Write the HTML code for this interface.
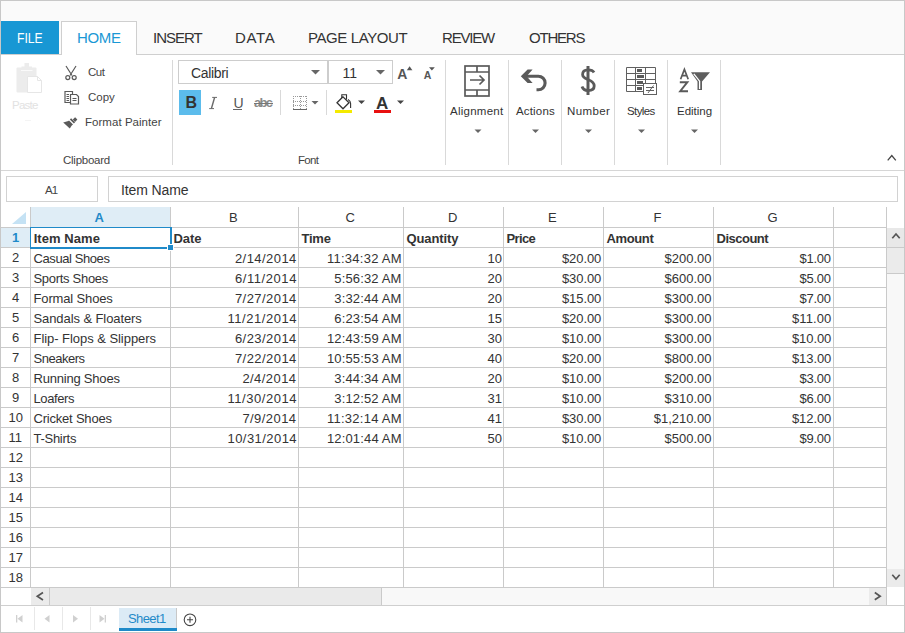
<!DOCTYPE html><html><head><meta charset="utf-8"><style>
*{margin:0;padding:0;box-sizing:border-box}
html,body{width:905px;height:633px;overflow:hidden;background:#fff}
body{font-family:"Liberation Sans",sans-serif;color:#333;position:relative}
.a{position:absolute}
.t{position:absolute;white-space:nowrap;line-height:1}
svg{position:absolute;overflow:visible}
</style></head><body>
<div class="a" style="left:1px;top:1px;width:903px;height:53px;background:#fafafa"></div>
<div class="a" style="left:1px;top:54px;width:903px;height:1px;background:#cfcfcf"></div>
<div class="a" style="left:1px;top:21px;width:58px;height:33px;background:#1897d4"></div>
<div class="t" style="left:17.00px;top:30px;font-size:15px;color:#fff;transform:scaleX(0.8125);transform-origin:0 0">FILE</div>
<div class="a" style="left:61px;top:21px;width:76px;height:34px;background:#fff;border:1px solid #cfcfcf;border-bottom:none"></div>
<div class="t" style="left:77.00px;top:30px;font-size:15px;color:#1a98d5;letter-spacing:-0.333px">HOME</div>
<div class="t" style="left:153.00px;top:30px;font-size:15px;color:#333;letter-spacing:-1.000px">INSERT</div>
<div class="t" style="left:235.00px;top:30px;font-size:15px;color:#333;letter-spacing:0.667px">DATA</div>
<div class="t" style="left:308.00px;top:30px;font-size:15px;color:#333;letter-spacing:-0.400px">PAGE LAYOUT</div>
<div class="t" style="left:442.00px;top:30px;font-size:15px;color:#333;letter-spacing:-1.200px">REVIEW</div>
<div class="t" style="left:529.00px;top:30px;font-size:15px;color:#333;letter-spacing:-1.200px">OTHERS</div>
<div class="a" style="left:1px;top:170px;width:903px;height:1px;background:#d6d6d6"></div>
<div class="a" style="left:172px;top:60px;width:1px;height:105px;background:#d9d9d9"></div>
<div class="a" style="left:445px;top:60px;width:1px;height:105px;background:#d9d9d9"></div>
<div class="a" style="left:508px;top:60px;width:1px;height:105px;background:#d9d9d9"></div>
<div class="a" style="left:561px;top:60px;width:1px;height:105px;background:#d9d9d9"></div>
<div class="a" style="left:614px;top:60px;width:1px;height:105px;background:#d9d9d9"></div>
<div class="a" style="left:667px;top:60px;width:1px;height:105px;background:#d9d9d9"></div>
<div class="a" style="left:720px;top:60px;width:1px;height:105px;background:#d9d9d9"></div>
<div class="t" style="left:63.00px;top:155px;font-size:11.5px;color:#444;letter-spacing:-0.250px">Clipboard</div>
<div class="t" style="left:298.00px;top:155px;font-size:11.5px;color:#444;letter-spacing:-0.667px">Font</div>
<svg style="left:0;top:0" width="905" height="633" viewBox="0 0 905 633">
<g fill="#ececec">
<rect x="16.5" y="67.5" width="20" height="25" rx="1"/>
<rect x="24.5" y="63" width="4.5" height="5"/>
<rect x="21.5" y="66.5" width="10.5" height="4"/>
</g>
<path d="M21 70.5 H32.5" stroke="#fafafa" stroke-width="1"/>
<path d="M27.5 76.5 H37.5 L41.5 80.5 V92.5 H27.5 Z" fill="#fff" stroke="#e6e6e6" stroke-width="1"/>
<path d="M37.5 76.5 V80.5 H41.5" fill="none" stroke="#e6e6e6" stroke-width="1"/>
</svg>
<div class="t" style="left:12.00px;top:100px;font-size:11.5px;color:#e2e2e2;letter-spacing:-0.750px">Paste</div>
<div class="a" style="left:25px;top:120px;width:6px;height:1px;background:#f4f4f4"></div>
<svg style="left:0;top:0" width="905" height="633" viewBox="0 0 905 633" fill="none" stroke="#5a5a5a" stroke-width="1.2">
<path d="M66 66 L72 75.5 M76 66 L70 75.5"/>
<circle cx="67.8" cy="77.6" r="2"/>
<circle cx="74.2" cy="77.6" r="2"/>
<path d="M72.5 94 V91.5 H65 V102.5 H70.5"/>
<path d="M70.5 94.5 H76.5 L78.5 96.5 V104 H70.5 Z"/>
<path d="M66.5 94.5 H69 M66.5 96.5 H69 M66.5 98.5 H69 M66.5 100.5 H69 M72.5 98.5 H76.5 M72.5 100.5 H76.5" stroke-width="1"/>
</svg>
<svg style="left:0;top:0" width="905" height="633" viewBox="0 0 905 633">
<path d="M63.2 122.6 L68.4 120.9 L72.2 124.8 L69.8 128.6 Z" fill="#5a5a5a"/>
<path d="M68.4 121 L72.4 125" stroke="#5a5a5a" stroke-width="1.7"/>
<path d="M70.5 118.9 L74.5 122.9" stroke="#5a5a5a" stroke-width="1.7"/>
<path d="M75.1 117.3 L77.4 119.6 L75.1 121.9 L72.8 119.6 Z" fill="#5a5a5a"/>
</svg>
<div class="t" style="left:88.00px;top:67px;font-size:11.5px;color:#444;letter-spacing:-0.500px">Cut</div>
<div class="t" style="left:88.00px;top:92px;font-size:11.5px;color:#444">Copy</div>
<div class="t" style="left:85.00px;top:117px;font-size:11.5px;color:#444;letter-spacing:0.038px">Format Painter</div>
<div class="a" style="left:178px;top:60px;width:150px;height:24px;border:1px solid #cdcdcd"></div>
<div class="a" style="left:328px;top:60px;width:65px;height:24px;border:1px solid #cdcdcd"></div>
<div class="t" style="left:191.00px;top:66px;font-size:14px;color:#333;letter-spacing:-0.333px">Calibri</div>
<div class="t" style="left:342.50px;top:66px;font-size:14px;color:#333">11</div>
<svg style="left:0;top:0" width="905" height="633" viewBox="0 0 905 633" fill="#666">
<path d="M311 70 H320 L315.5 74.5 Z"/>
<path d="M376 70 H385 L380.5 74.5 Z"/>
<path d="M311.5 101 H318.5 L315 104.5 Z"/>
<path d="M358 100.5 H365 L361.5 104 Z" fill="#444"/>
<path d="M397 100.5 H404 L400.5 104 Z" fill="#444"/>
<path d="M406.8 70.2 L409.6 66.2 L412.4 70.2 Z" fill="#555"/>
<path d="M429 67.2 H434.8 L431.9 70.4 Z" fill="#555"/>
</svg>
<div class="t" style="left:397.20px;top:67px;font-size:14px;color:#555;font-weight:bold">A</div>
<div class="t" style="left:423.80px;top:70px;font-size:10.5px;color:#555;font-weight:bold">A</div>
<div class="a" style="left:179px;top:90px;width:22px;height:25px;background:#5cbcec"></div>
<div class="t" style="left:185.50px;top:95px;font-size:16px;color:#333;font-weight:bold">B</div>
<svg style="left:0;top:0" width="905" height="633" fill="none" stroke="#6a6a6a"><path d="M214.6 97.5 L211.4 108.5" stroke-width="1.4"/><path d="M212.2 97.4 H217 M209.2 108.6 H214" stroke-width="1"/></svg>
<div class="t" style="left:233.40px;top:96px;font-size:14px;color:#555">U</div>
<div class="a" style="left:233px;top:109px;width:9px;height:1px;background:#666"></div>
<div class="t" style="left:254.00px;top:96px;font-size:13px;color:#8a8a8a;font-weight:bold;letter-spacing:-1.750px">abc</div>
<div class="a" style="left:254px;top:103px;width:19px;height:1px;background:#777"></div>
<div class="a" style="left:280px;top:90px;width:1px;height:25px;background:#d9d9d9"></div>
<div class="a" style="left:326px;top:90px;width:1px;height:25px;background:#d9d9d9"></div>
<svg style="left:0;top:0" width="905" height="633" viewBox="0 0 905 633">
<g stroke="#999" stroke-width="1" stroke-dasharray="1 1" fill="none">
<path d="M293 96.5 H307 M293 101.5 H307 M293 105.5 H307"/>
<path d="M293.5 96 V109 M300.5 96 V109 M306.5 96 V109"/>
</g>
<path d="M293 109.5 H307" stroke="#666" stroke-width="1"/>
</svg>
<svg style="left:0;top:0" width="905" height="633" viewBox="0 0 905 633">
<rect x="335" y="110" width="17" height="3" fill="#f4ea00"/>
<path d="M341.8 98 V94.8 H346.5 V99.5" fill="none" stroke="#333" stroke-width="1.1"/>
<path d="M343 96.8 L337 102.8 L343 108.8 L349 102.8 Z" fill="none" stroke="#333" stroke-width="1.3"/>
<path d="M348 99.5 Q350.6 101 350.6 103.5 V108" fill="none" stroke="#333" stroke-width="1.1"/>
<rect x="374" y="110" width="17" height="3" fill="#e81010"/>
</svg>
<div class="t" style="left:376.00px;top:95px;font-size:17px;color:#333;font-weight:bold">A</div>
<svg style="left:0;top:0" width="905" height="633" viewBox="0 0 905 633" fill="none" stroke="#5a5a5a">
<g stroke-width="1.7">
<rect x="465" y="66" width="24" height="30"/>
<path d="M465 72 H489 M465 90 H489 M477 66 V72 M477 90 V96"/>
<path d="M470 80 H484 M479.5 75.5 L484 80 L479.5 84.5"/>
</g>
<path d="M525 76.2 H538.3 A 6.8 6.8 0 0 1 538.3 89.8 H536.5" stroke-width="3.1"/>
<path d="M520.8 76.3 L527.6 69.6 H532.6 L526.6 76.3 L532.6 83 H527.6 Z" fill="#5a5a5a" stroke="none"/>
<path d="M588 66 V95" stroke-width="3"/>
<path d="M594 72.5 C593 70.5 591 69.8 588 69.8 C584.5 69.8 582.6 71.8 582.6 74.5 C582.6 77.8 586 78.8 588.5 79.8 C591.5 81 594.2 82.5 594.2 86 C594.2 89 591.5 90.5 588 90.5 C584.8 90.5 582.8 89 582 86.5" stroke-width="2.8"/>
</svg>
<svg style="left:0;top:0" width="905" height="633" viewBox="0 0 905 633" fill="none" stroke="#606060" stroke-width="1">
<path d="M626.5 67.5 H655.5 V83 M626.5 67.5 V91.5 H643.5 M626.5 73.5 H655.5 M626.5 79.5 H655.5 M626.5 85.5 H643.5 M635.5 67.5 V91.5 M645.5 67.5 V83"/>
<g fill="#5a5a5a" stroke="none">
<rect x="637" y="69" width="5" height="3"/>
<rect x="637" y="75" width="7" height="3"/>
<rect x="637" y="81" width="6" height="3"/>
<rect x="637" y="87" width="5" height="3"/>
</g>
<rect x="643.5" y="83.5" width="13" height="11" fill="#fff"/>
<path d="M646 87.5 H654 M646 90.5 H654 M648 93 L653.5 85.5"/>
</svg>
<svg style="left:0;top:0" width="905" height="633" viewBox="0 0 905 633">
<path d="M680.6 79.2 L684.4 69.4 L688.2 79.2 M682 75.6 H686.8" fill="none" stroke="#5a5a5a" stroke-width="1.7"/>
<path d="M679.8 82.2 H687.4 L680.2 91.2 H688" fill="none" stroke="#5a5a5a" stroke-width="1.9"/>
<path d="M691 72.3 H710 L702 81.5 V90 H697.5 V81.5 Z" fill="#5e5e5e"/>
<path d="M693.8 73.8 L699.6 81.2 V89" fill="none" stroke="#fff" stroke-width="1.3"/>
</svg>
<div class="t" style="left:450.00px;top:106px;font-size:11.5px;color:#333;letter-spacing:0.250px">Alignment</div>
<div class="t" style="left:516.00px;top:106px;font-size:11.5px;color:#333;letter-spacing:0.167px">Actions</div>
<div class="t" style="left:567.00px;top:106px;font-size:11.5px;color:#333;letter-spacing:0.400px">Number</div>
<div class="t" style="left:627.00px;top:106px;font-size:11.5px;color:#333;letter-spacing:-0.600px">Styles</div>
<div class="t" style="left:677.00px;top:106px;font-size:11.5px;color:#333">Editing</div>
<svg style="left:0;top:0" width="905" height="633" viewBox="0 0 905 633" fill="#666">
<path d="M474.5 129.5 H481.5 L478 133 Z"/>
<path d="M532 129.5 H539 L535.5 133 Z"/>
<path d="M585 129.5 H592 L588.5 133 Z"/>
<path d="M638 129.5 H645 L641.5 133 Z"/>
<path d="M691 129.5 H698 L694.5 133 Z"/>
<path d="M887.7 160.4 L891.8 155.5 L895.8 160.4" fill="none" stroke="#444" stroke-width="1.3"/>
</svg>
<div class="a" style="left:6px;top:176px;width:92px;height:26px;border:1px solid #d2d2d2"></div>
<div class="t" style="left:45.00px;top:185px;font-size:11.5px;color:#444;letter-spacing:-1.000px">A1</div>
<div class="a" style="left:108px;top:176px;width:790px;height:26px;border:1px solid #d2d2d2"></div>
<div class="t" style="left:121.00px;top:183px;font-size:14px;color:#333;letter-spacing:-0.125px">Item Name</div>
<div class="a" style="left:31px;top:207px;width:139px;height:20px;background:#dfedf6"></div>
<div class="a" style="left:1px;top:228px;width:29px;height:19px;background:#dfedf6"></div>
<svg style="left:12px;top:212px" width="14" height="12"><polygon points="14,0 14,12 0,12" fill="#c5e2f4"/></svg>
<div class="a" style="left:30px;top:207px;width:1px;height:380px;background:#cacaca"></div>
<div class="a" style="left:170px;top:207px;width:1px;height:380px;background:#cacaca"></div>
<div class="a" style="left:298px;top:207px;width:1px;height:380px;background:#cacaca"></div>
<div class="a" style="left:403px;top:207px;width:1px;height:380px;background:#cacaca"></div>
<div class="a" style="left:503px;top:207px;width:1px;height:380px;background:#cacaca"></div>
<div class="a" style="left:603px;top:207px;width:1px;height:380px;background:#cacaca"></div>
<div class="a" style="left:713px;top:207px;width:1px;height:380px;background:#cacaca"></div>
<div class="a" style="left:833px;top:207px;width:1px;height:380px;background:#cacaca"></div>
<div class="a" style="left:886px;top:207px;width:1px;height:380px;background:#cacaca"></div>
<div class="a" style="left:1px;top:227px;width:885px;height:1px;background:#cacaca"></div>
<div class="a" style="left:1px;top:247px;width:885px;height:1px;background:#cacaca"></div>
<div class="a" style="left:1px;top:267px;width:885px;height:1px;background:#cacaca"></div>
<div class="a" style="left:1px;top:287px;width:885px;height:1px;background:#cacaca"></div>
<div class="a" style="left:1px;top:307px;width:885px;height:1px;background:#cacaca"></div>
<div class="a" style="left:1px;top:327px;width:885px;height:1px;background:#cacaca"></div>
<div class="a" style="left:1px;top:347px;width:885px;height:1px;background:#cacaca"></div>
<div class="a" style="left:1px;top:367px;width:885px;height:1px;background:#cacaca"></div>
<div class="a" style="left:1px;top:387px;width:885px;height:1px;background:#cacaca"></div>
<div class="a" style="left:1px;top:407px;width:885px;height:1px;background:#cacaca"></div>
<div class="a" style="left:1px;top:427px;width:885px;height:1px;background:#cacaca"></div>
<div class="a" style="left:1px;top:447px;width:885px;height:1px;background:#cacaca"></div>
<div class="a" style="left:1px;top:467px;width:885px;height:1px;background:#cacaca"></div>
<div class="a" style="left:1px;top:487px;width:885px;height:1px;background:#cacaca"></div>
<div class="a" style="left:1px;top:507px;width:885px;height:1px;background:#cacaca"></div>
<div class="a" style="left:1px;top:527px;width:885px;height:1px;background:#cacaca"></div>
<div class="a" style="left:1px;top:547px;width:885px;height:1px;background:#cacaca"></div>
<div class="a" style="left:1px;top:567px;width:885px;height:1px;background:#cacaca"></div>
<div class="a" style="left:1px;top:587px;width:885px;height:1px;background:#cacaca"></div>
<div class="t" style="left:94.50px;top:211px;font-size:13px;color:#1f8ac9;font-weight:bold">A</div>
<div class="t" style="left:229.00px;top:211px;font-size:13px;color:#333">B</div>
<div class="t" style="left:345.50px;top:211px;font-size:13px;color:#333">C</div>
<div class="t" style="left:448.00px;top:211px;font-size:13px;color:#333">D</div>
<div class="t" style="left:548.00px;top:211px;font-size:13px;color:#333">E</div>
<div class="t" style="left:653.50px;top:211px;font-size:13px;color:#333">F</div>
<div class="t" style="left:767.50px;top:211px;font-size:13px;color:#333">G</div>
<div class="t" style="left:12.00px;top:231px;font-size:13px;color:#1f8ac9;font-weight:bold">1</div>
<div class="t" style="left:12.00px;top:251px;font-size:13px;color:#333">2</div>
<div class="t" style="left:12.00px;top:271px;font-size:13px;color:#333">3</div>
<div class="t" style="left:12.00px;top:291px;font-size:13px;color:#333">4</div>
<div class="t" style="left:12.00px;top:311px;font-size:13px;color:#333">5</div>
<div class="t" style="left:12.00px;top:331px;font-size:13px;color:#333">6</div>
<div class="t" style="left:12.00px;top:351px;font-size:13px;color:#333">7</div>
<div class="t" style="left:12.00px;top:371px;font-size:13px;color:#333">8</div>
<div class="t" style="left:12.00px;top:391px;font-size:13px;color:#333">9</div>
<div class="t" style="left:8.50px;top:411px;font-size:13px;color:#333">10</div>
<div class="t" style="left:8.50px;top:431px;font-size:13px;color:#333">11</div>
<div class="t" style="left:8.50px;top:451px;font-size:13px;color:#333">12</div>
<div class="t" style="left:8.50px;top:471px;font-size:13px;color:#333">13</div>
<div class="t" style="left:8.50px;top:491px;font-size:13px;color:#333">14</div>
<div class="t" style="left:8.50px;top:511px;font-size:13px;color:#333">15</div>
<div class="t" style="left:8.50px;top:531px;font-size:13px;color:#333">16</div>
<div class="t" style="left:8.50px;top:551px;font-size:13px;color:#333">17</div>
<div class="t" style="left:8.50px;top:571px;font-size:13px;color:#333">18</div>
<div class="t" style="left:33.70px;top:232px;font-size:13px;color:#333;font-weight:bold;letter-spacing:0.062px">Item Name</div>
<div class="t" style="left:173.40px;top:232px;font-size:13px;color:#333;font-weight:bold">Date</div>
<div class="t" style="left:301.40px;top:232px;font-size:13px;color:#333;font-weight:bold;letter-spacing:-0.200px">Time</div>
<div class="t" style="left:406.50px;top:232px;font-size:13px;color:#333;font-weight:bold;letter-spacing:-0.100px">Quantity</div>
<div class="t" style="left:506.40px;top:232px;font-size:13px;color:#333;font-weight:bold;letter-spacing:-0.600px">Price</div>
<div class="t" style="left:606.40px;top:232px;font-size:13px;color:#333;font-weight:bold;letter-spacing:-0.340px">Amount</div>
<div class="t" style="left:716.60px;top:232px;font-size:13px;color:#333;font-weight:bold;letter-spacing:-0.514px">Discount</div>
<div class="t" style="left:33.50px;top:252px;font-size:13px;color:#333;letter-spacing:-0.409px">Casual Shoes</div>
<div class="t" style="left:234.95px;top:252px;font-size:13px;color:#333;letter-spacing:0.444px">2/14/2014</div>
<div class="t" style="left:326.91px;top:252px;font-size:13px;color:#333;letter-spacing:0.259px">11:34:32 AM</div>
<div class="t" style="left:487.60px;top:252px;font-size:13px;color:#333;letter-spacing:-0.100px">10</div>
<div class="t" style="left:561.97px;top:252px;font-size:13px;color:#333;letter-spacing:-0.094px">$20.00</div>
<div class="t" style="left:664.52px;top:252px;font-size:13px;color:#333">$200.00</div>
<div class="t" style="left:799.42px;top:252px;font-size:13px;color:#333;letter-spacing:-0.230px">$1.00</div>
<div class="t" style="left:33.50px;top:272px;font-size:13px;color:#333;letter-spacing:-0.300px">Sports Shoes</div>
<div class="t" style="left:234.95px;top:272px;font-size:13px;color:#333;letter-spacing:0.569px">6/11/2014</div>
<div class="t" style="left:334.36px;top:272px;font-size:13px;color:#333;letter-spacing:0.127px">5:56:32 AM</div>
<div class="t" style="left:487.60px;top:272px;font-size:13px;color:#333;letter-spacing:-0.100px">20</div>
<div class="t" style="left:561.97px;top:272px;font-size:13px;color:#333;letter-spacing:-0.094px">$30.00</div>
<div class="t" style="left:664.52px;top:272px;font-size:13px;color:#333">$600.00</div>
<div class="t" style="left:799.42px;top:272px;font-size:13px;color:#333;letter-spacing:-0.230px">$5.00</div>
<div class="t" style="left:33.50px;top:292px;font-size:13px;color:#333;letter-spacing:-0.145px">Formal Shoes</div>
<div class="t" style="left:234.95px;top:292px;font-size:13px;color:#333;letter-spacing:0.444px">7/27/2014</div>
<div class="t" style="left:334.36px;top:292px;font-size:13px;color:#333;letter-spacing:0.127px">3:32:44 AM</div>
<div class="t" style="left:487.60px;top:292px;font-size:13px;color:#333;letter-spacing:-0.100px">20</div>
<div class="t" style="left:561.97px;top:292px;font-size:13px;color:#333;letter-spacing:-0.094px">$15.00</div>
<div class="t" style="left:664.52px;top:292px;font-size:13px;color:#333">$300.00</div>
<div class="t" style="left:799.42px;top:292px;font-size:13px;color:#333;letter-spacing:-0.230px">$7.00</div>
<div class="t" style="left:33.50px;top:312px;font-size:13px;color:#333;letter-spacing:-0.088px">Sandals &amp; Floaters</div>
<div class="t" style="left:227.50px;top:312px;font-size:13px;color:#333;letter-spacing:0.556px">11/21/2014</div>
<div class="t" style="left:334.36px;top:312px;font-size:13px;color:#333;letter-spacing:0.127px">6:23:54 AM</div>
<div class="t" style="left:487.60px;top:312px;font-size:13px;color:#333;letter-spacing:-0.100px">15</div>
<div class="t" style="left:561.97px;top:312px;font-size:13px;color:#333;letter-spacing:-0.094px">$20.00</div>
<div class="t" style="left:664.52px;top:312px;font-size:13px;color:#333">$300.00</div>
<div class="t" style="left:791.97px;top:312px;font-size:13px;color:#333;letter-spacing:0.106px">$11.00</div>
<div class="t" style="left:33.50px;top:332px;font-size:13px;color:#333;letter-spacing:-0.048px">Flip- Flops &amp; Slippers</div>
<div class="t" style="left:234.95px;top:332px;font-size:13px;color:#333;letter-spacing:0.444px">6/23/2014</div>
<div class="t" style="left:326.91px;top:332px;font-size:13px;color:#333;letter-spacing:0.159px">12:43:59 AM</div>
<div class="t" style="left:487.60px;top:332px;font-size:13px;color:#333;letter-spacing:-0.100px">30</div>
<div class="t" style="left:561.97px;top:332px;font-size:13px;color:#333;letter-spacing:-0.094px">$10.00</div>
<div class="t" style="left:664.52px;top:332px;font-size:13px;color:#333">$300.00</div>
<div class="t" style="left:791.97px;top:332px;font-size:13px;color:#333;letter-spacing:-0.094px">$10.00</div>
<div class="t" style="left:33.50px;top:352px;font-size:13px;color:#333;letter-spacing:-0.471px">Sneakers</div>
<div class="t" style="left:234.95px;top:352px;font-size:13px;color:#333;letter-spacing:0.444px">7/22/2014</div>
<div class="t" style="left:326.91px;top:352px;font-size:13px;color:#333;letter-spacing:0.159px">10:55:53 AM</div>
<div class="t" style="left:487.60px;top:352px;font-size:13px;color:#333;letter-spacing:-0.100px">40</div>
<div class="t" style="left:561.97px;top:352px;font-size:13px;color:#333;letter-spacing:-0.094px">$20.00</div>
<div class="t" style="left:664.52px;top:352px;font-size:13px;color:#333">$800.00</div>
<div class="t" style="left:791.97px;top:352px;font-size:13px;color:#333;letter-spacing:-0.094px">$13.00</div>
<div class="t" style="left:33.50px;top:372px;font-size:13px;color:#333;letter-spacing:-0.208px">Running Shoes</div>
<div class="t" style="left:242.40px;top:372px;font-size:13px;color:#333;letter-spacing:0.443px">2/4/2014</div>
<div class="t" style="left:334.36px;top:372px;font-size:13px;color:#333;letter-spacing:0.127px">3:44:34 AM</div>
<div class="t" style="left:487.60px;top:372px;font-size:13px;color:#333;letter-spacing:-0.100px">20</div>
<div class="t" style="left:561.97px;top:372px;font-size:13px;color:#333;letter-spacing:-0.094px">$10.00</div>
<div class="t" style="left:664.52px;top:372px;font-size:13px;color:#333">$200.00</div>
<div class="t" style="left:799.42px;top:372px;font-size:13px;color:#333;letter-spacing:-0.230px">$3.00</div>
<div class="t" style="left:33.50px;top:392px;font-size:13px;color:#333;letter-spacing:-0.383px">Loafers</div>
<div class="t" style="left:227.50px;top:392px;font-size:13px;color:#333;letter-spacing:0.556px">11/30/2014</div>
<div class="t" style="left:334.36px;top:392px;font-size:13px;color:#333;letter-spacing:0.127px">3:12:52 AM</div>
<div class="t" style="left:487.60px;top:392px;font-size:13px;color:#333;letter-spacing:-0.100px">31</div>
<div class="t" style="left:561.97px;top:392px;font-size:13px;color:#333;letter-spacing:-0.094px">$10.00</div>
<div class="t" style="left:664.52px;top:392px;font-size:13px;color:#333">$310.00</div>
<div class="t" style="left:799.42px;top:392px;font-size:13px;color:#333;letter-spacing:-0.230px">$6.00</div>
<div class="t" style="left:33.50px;top:412px;font-size:13px;color:#333;letter-spacing:-0.208px">Cricket Shoes</div>
<div class="t" style="left:242.40px;top:412px;font-size:13px;color:#333;letter-spacing:0.443px">7/9/2014</div>
<div class="t" style="left:326.91px;top:412px;font-size:13px;color:#333;letter-spacing:0.259px">11:32:14 AM</div>
<div class="t" style="left:487.60px;top:412px;font-size:13px;color:#333;letter-spacing:-0.100px">41</div>
<div class="t" style="left:561.97px;top:412px;font-size:13px;color:#333;letter-spacing:-0.094px">$30.00</div>
<div class="t" style="left:653.87px;top:412px;font-size:13px;color:#333;letter-spacing:-0.046px">$1,210.00</div>
<div class="t" style="left:791.97px;top:412px;font-size:13px;color:#333;letter-spacing:-0.094px">$12.00</div>
<div class="t" style="left:33.50px;top:432px;font-size:13px;color:#333;letter-spacing:-0.271px">T-Shirts</div>
<div class="t" style="left:227.50px;top:432px;font-size:13px;color:#333;letter-spacing:0.444px">10/31/2014</div>
<div class="t" style="left:326.91px;top:432px;font-size:13px;color:#333;letter-spacing:0.159px">12:01:44 AM</div>
<div class="t" style="left:487.60px;top:432px;font-size:13px;color:#333;letter-spacing:-0.100px">50</div>
<div class="t" style="left:561.97px;top:432px;font-size:13px;color:#333;letter-spacing:-0.094px">$10.00</div>
<div class="t" style="left:664.52px;top:432px;font-size:13px;color:#333">$500.00</div>
<div class="t" style="left:799.42px;top:432px;font-size:13px;color:#333;letter-spacing:-0.230px">$9.00</div>
<div class="a" style="left:30px;top:227px;width:1px;height:22px;background:#1f8ac9"></div>
<div class="a" style="left:30px;top:227px;width:142px;height:1px;background:#1f8ac9"></div>
<div class="a" style="left:170px;top:227px;width:2px;height:17px;background:#1f8ac9"></div>
<div class="a" style="left:30px;top:247px;width:137px;height:2px;background:#1f8ac9"></div>
<div class="a" style="left:167px;top:244px;width:7px;height:7px;background:#fff"></div>
<div class="a" style="left:168px;top:245px;width:5px;height:5px;background:#1f8ac9"></div>
<div class="a" style="left:887px;top:228px;width:17px;height:359px;background:#f8f8f8"></div>
<div class="a" style="left:887px;top:228px;width:17px;height:19px;background:#e8e8e8"></div>
<div class="a" style="left:887px;top:247px;width:17px;height:1px;background:#cacaca"></div>
<div class="a" style="left:887px;top:248px;width:17px;height:25px;background:#ebebeb"></div>
<div class="a" style="left:887px;top:273px;width:17px;height:1px;background:#cacaca"></div>
<div class="a" style="left:887px;top:569px;width:17px;height:18px;background:#ebebeb"></div>
<div class="a" style="left:1px;top:587px;width:886px;height:1px;background:#cacaca"></div>
<div class="a" style="left:31px;top:588px;width:855px;height:17px;background:#f8f8f8"></div>
<div class="a" style="left:31px;top:588px;width:18px;height:17px;background:#ebebeb"></div>
<div class="a" style="left:49px;top:588px;width:1px;height:17px;background:#cacaca"></div>
<div class="a" style="left:50px;top:588px;width:331px;height:17px;background:#eaeaea"></div>
<div class="a" style="left:381px;top:588px;width:1px;height:17px;background:#cacaca"></div>
<div class="a" style="left:869px;top:588px;width:17px;height:17px;background:#ebebeb"></div>
<div class="a" style="left:886px;top:588px;width:1px;height:17px;background:#cacaca"></div>
<div class="a" style="left:1px;top:605px;width:903px;height:1px;background:#cfcfcf"></div>
<svg style="left:0;top:0" width="905" height="633" viewBox="0 0 905 633" fill="none" stroke="#555" stroke-width="1.7">
<path d="M892.3 238.3 L896 234 L899.7 238.3"/>
<path d="M892.3 574.8 L896 579 L899.7 574.8"/>
<path d="M43 592.5 L37.3 596.3 L43 600"/>
<path d="M874.8 592.5 L880.2 596.2 L874.8 599.8"/>
</svg>
<div class="a" style="left:34px;top:607px;width:1px;height:23px;background:#e8e8e8"></div>
<div class="a" style="left:62px;top:607px;width:1px;height:23px;background:#e8e8e8"></div>
<div class="a" style="left:90px;top:607px;width:1px;height:23px;background:#e8e8e8"></div>
<svg style="left:0;top:0" width="905" height="633" viewBox="0 0 905 633" fill="#d0d0d0">
<rect x="16" y="615" width="1.3" height="7.5"/><path d="M17.5 618.8 L22.5 615 V622.5 Z"/>
<path d="M44.5 618.8 L49.5 615 V622.5 Z"/>
<path d="M78 618.8 L73 615 V622.5 Z"/>
<path d="M104.5 618.8 L99.5 615 V622.5 Z"/><rect x="104.7" y="615" width="1.3" height="7.5"/>
</svg>
<div class="a" style="left:119px;top:608px;width:57px;height:23px;background:#dcebf6"></div>
<div class="a" style="left:176px;top:608px;width:1px;height:23px;background:#c8c8c8"></div>
<div class="a" style="left:119px;top:628px;width:58px;height:3px;background:#1f8ac9"></div>
<div class="t" style="left:128.00px;top:612px;font-size:13px;color:#1f8ac9;letter-spacing:-0.600px">Sheet1</div>
<svg style="left:0;top:0" width="905" height="633" viewBox="0 0 905 633" fill="none" stroke="#444" stroke-width="1.1">
<circle cx="190" cy="619.8" r="5.8"/>
<path d="M187 619.8 H193 M190 616.8 V622.8"/>
</svg>
<div class="a" style="left:0;top:0;width:905px;height:633px;border:1px solid #c8c8c8"></div>
</body></html>
